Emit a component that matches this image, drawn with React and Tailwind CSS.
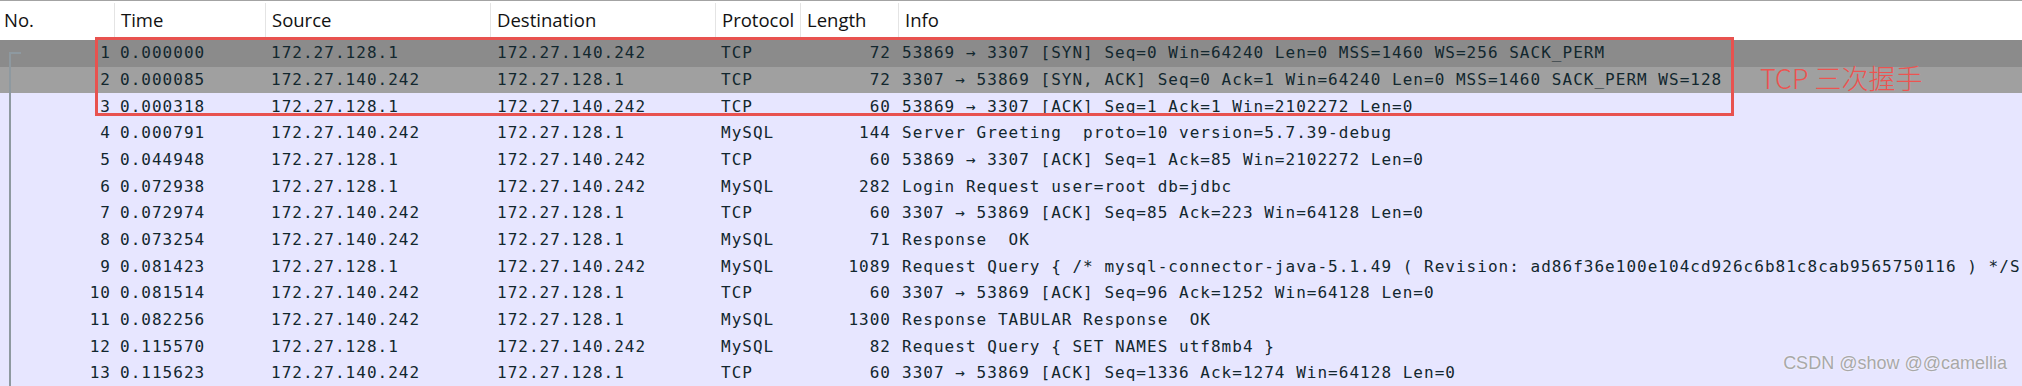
import React from 'react';

const cols = 'grid grid-cols-[115px_151px_225px_225px_85px_98px_1fr]';
const mono = "font-['DejaVu_Sans_Mono',monospace] text-[16px] tracking-[1.02px]";

const packets = [
  ['1', '0.000000', '172.27.128.1', '172.27.140.242', 'TCP', '72', '53869 → 3307 [SYN] Seq=0 Win=64240 Len=0 MSS=1460 WS=256 SACK_PERM'],
  ['2', '0.000085', '172.27.140.242', '172.27.128.1', 'TCP', '72', '3307 → 53869 [SYN, ACK] Seq=0 Ack=1 Win=64240 Len=0 MSS=1460 SACK_PERM WS=128'],
  ['3', '0.000318', '172.27.128.1', '172.27.140.242', 'TCP', '60', '53869 → 3307 [ACK] Seq=1 Ack=1 Win=2102272 Len=0'],
  ['4', '0.000791', '172.27.140.242', '172.27.128.1', 'MySQL', '144', 'Server Greeting  proto=10 version=5.7.39-debug'],
  ['5', '0.044948', '172.27.128.1', '172.27.140.242', 'TCP', '60', '53869 → 3307 [ACK] Seq=1 Ack=85 Win=2102272 Len=0'],
  ['6', '0.072938', '172.27.128.1', '172.27.140.242', 'MySQL', '282', 'Login Request user=root db=jdbc'],
  ['7', '0.072974', '172.27.140.242', '172.27.128.1', 'TCP', '60', '3307 → 53869 [ACK] Seq=85 Ack=223 Win=64128 Len=0'],
  ['8', '0.073254', '172.27.140.242', '172.27.128.1', 'MySQL', '71', 'Response  OK'],
  ['9', '0.081423', '172.27.128.1', '172.27.140.242', 'MySQL', '1089', 'Request Query { /* mysql-connector-java-5.1.49 ( Revision: ad86f36e100e104cd926c6b81c8cab9565750116 ) */S'],
  ['10', '0.081514', '172.27.140.242', '172.27.128.1', 'TCP', '60', '3307 → 53869 [ACK] Seq=96 Ack=1252 Win=64128 Len=0'],
  ['11', '0.082256', '172.27.140.242', '172.27.128.1', 'MySQL', '1300', 'Response TABULAR Response  OK'],
  ['12', '0.115570', '172.27.128.1', '172.27.140.242', 'MySQL', '82', 'Request Query { SET NAMES utf8mb4 }'],
  ['13', '0.115623', '172.27.140.242', '172.27.128.1', 'TCP', '60', '3307 → 53869 [ACK] Seq=1336 Ack=1274 Win=64128 Len=0'],
];

const headers = ['No.', 'Time', 'Source', 'Destination', 'Protocol', 'Length', 'Info'];

const rowBg = (i) => {
  if (i === 0) return 'bg-[#8b8b8b]';
  if (i === 1) return 'bg-[#a0a0a0]';
  return 'bg-[#e7e6ff]';
};

const App = () => {
  return (
    <div className="relative w-[2022px] h-[386px] overflow-hidden bg-[#e7e6ff]">
      {/* Column header */}
      <div className={`${cols} h-[40px] bg-white border-t border-[#a3a3a3]`}>
        {headers.map((h, i) => (
          <div
            key={h}
            className={`flex items-center px-[6px] pb-[2px] font-['Open_Sans',sans-serif] text-[18.5px] text-[#111] ${i < 6 ? 'border-r border-[#e4e4e4] my-[2px]' : ''} ${i === 0 ? 'pl-[4px]' : ''}`}
          >
            {h}
          </div>
        ))}
      </div>

      {/* Packet list */}
      <div className="flex flex-col">
        {packets.map((p, i) => (
          <div key={p[0]} className={`${cols} h-[26.67px] items-center text-[#12272e] ${mono} ${rowBg(i)}`}>
            <div className="text-right pr-[4px]">{p[0]}</div>
            <div className="pl-[5px]">{p[1]}</div>
            <div className="pl-[5px]">{p[2]}</div>
            <div className="pl-[6px]">{p[3]}</div>
            <div className="pl-[5px]">{p[4]}</div>
            <div className="text-right pr-[8px]">{p[5]}</div>
            <div className="pl-[3px] whitespace-pre overflow-hidden">{p[6]}</div>
          </div>
        ))}
      </div>

      {/* related packets bracket */}
      <div className="absolute left-[9px] top-[52px] bottom-0 w-[12px] border-l-2 border-t-2 border-[#8e99a0]" />

      {/* handshake highlight */}
      <div className="absolute left-[95px] top-[37px] w-[1639px] h-[79px] border-[3px] border-[#e8524f]" />
      <div className="absolute left-[1760px] top-[64px] leading-none text-[27px] font-light text-[#ec5451] font-['Noto_Sans_CJK_SC','Noto_Sans',sans-serif]">
        TCP 三次握手
      </div>

      {/* watermark */}
      <div className="absolute right-[15px] bottom-[9px] font-['Liberation_Sans',Arial,sans-serif] text-[18px] text-[#a8a8a8] [text-shadow:0_0_2px_#ffffff]">
        CSDN @show @@camellia
      </div>
    </div>
  );
};

export default App;
